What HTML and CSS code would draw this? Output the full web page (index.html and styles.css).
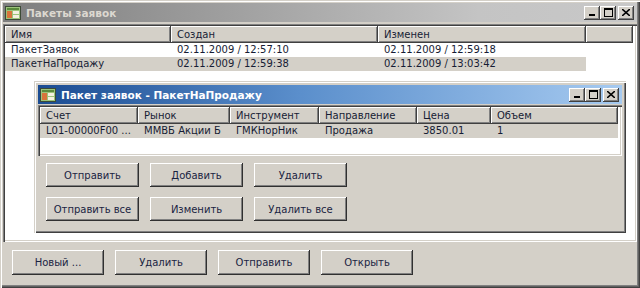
FILE: index.html
```html
<!DOCTYPE html>
<html lang="ru">
<head>
    <meta charset="UTF-8">
    <link rel="stylesheet" href="styles.css">
    <title>Пакеты заявок</title>
</head>
<body>
    <!-- Main window -->
    <div class="window">
        <div class="titlebar inactive">
            <svg class="app-icon" width="16" height="14" viewBox="0 0 16 14">
                <rect x="0.5" y="0.5" width="15" height="13" fill="#9cc47a" stroke="#3c4a36"/>
                <rect x="2" y="2" width="12" height="2" fill="#5a8a3c"/>
                <rect x="2" y="5" width="5" height="7" fill="#d8743a"/>
                <rect x="8" y="5" width="6" height="3" fill="#f4f0e0"/>
                <rect x="8" y="9" width="6" height="3" fill="#f4f0e0"/>
            </svg>
            <span class="title">Пакеты заявок</span>
            <div class="caption-buttons">
                <span class="cbtn"><svg width="8" height="7" viewBox="0 0 8 7"><rect x="1" y="5" width="6" height="2" fill="#000"/></svg></span>
                <span class="cbtn"><svg width="9" height="9" viewBox="0 0 9 9"><rect x="0.5" y="1" width="8" height="7.5" fill="none" stroke="#000"/><rect x="0" y="0" width="9" height="2" fill="#000"/></svg></span>
                <span class="cbtn close"><svg width="8" height="7" viewBox="0 0 8 7"><path d="M0 0 L8 7 M8 0 L0 7" stroke="#000" stroke-width="1.6"/></svg></span>
            </div>
        </div>

        <div class="list outer-list">
            <div class="lv-head">
                <span>Имя</span>
                <span>Создан</span>
                <span>Изменен</span>
                <span></span>
            </div>
            <div class="lv-row">
                <span>ПакетЗаявок</span>
                <span>02.11.2009 / 12:57:10</span>
                <span>02.11.2009 / 12:59:18</span>
                <span class="fill"></span>
            </div>
            <div class="lv-row sel">
                <span>ПакетНаПродажу</span>
                <span>02.11.2009 / 12:59:38</span>
                <span>02.11.2009 / 13:03:42</span>
                <span class="fill"></span>
            </div>

            <!-- Child window -->
            <div class="child">
                <div class="titlebar active">
                    <svg class="app-icon" width="16" height="14" viewBox="0 0 16 14">
                        <rect x="0.5" y="0.5" width="15" height="13" fill="#9cc47a" stroke="#3c4a36"/>
                        <rect x="2" y="2" width="12" height="2" fill="#5a8a3c"/>
                        <rect x="2" y="5" width="5" height="7" fill="#d8743a"/>
                        <rect x="8" y="5" width="6" height="3" fill="#f4f0e0"/>
                        <rect x="8" y="9" width="6" height="3" fill="#f4f0e0"/>
                    </svg>
                    <span class="title">Пакет заявок - ПакетНаПродажу</span>
                    <div class="caption-buttons">
                        <span class="cbtn"><svg width="8" height="7" viewBox="0 0 8 7"><rect x="1" y="5" width="6" height="2" fill="#000"/></svg></span>
                        <span class="cbtn"><svg width="9" height="9" viewBox="0 0 9 9"><rect x="0.5" y="1" width="8" height="7.5" fill="none" stroke="#000"/><rect x="0" y="0" width="9" height="2" fill="#000"/></svg></span>
                        <span class="cbtn close"><svg width="8" height="7" viewBox="0 0 8 7"><path d="M0 0 L8 7 M8 0 L0 7" stroke="#000" stroke-width="1.6"/></svg></span>
                    </div>
                </div>

                <div class="list inner-list">
                    <div class="lv-head">
                        <span>Счет</span>
                        <span>Рынок</span>
                        <span>Инструмент</span>
                        <span>Направление</span>
                        <span>Цена</span>
                        <span>Объем</span>
                    </div>
                    <div class="lv-row sel">
                        <span>L01-00000F00 ...</span>
                        <span>ММВБ Акции Б</span>
                        <span>ГМКНорНик</span>
                        <span>Продажа</span>
                        <span>3850.01</span>
                        <span>1</span>
                    </div>
                </div>

                <div class="panel">
                    <button class="btn">Отправить</button>
                    <button class="btn">Добавить</button>
                    <button class="btn">Удалить</button>
                    <button class="btn">Отправить все</button>
                    <button class="btn">Изменить</button>
                    <button class="btn">Удалить все</button>
                </div>
            </div>
        </div>

        <div class="bottom-bar">
            <button class="btn">Новый ...</button>
            <button class="btn">Удалить</button>
            <button class="btn">Отправить</button>
            <button class="btn">Открыть</button>
        </div>
    </div>
</body>
</html>
```

FILE: styles.css
```css
/* Base */
* {
    box-sizing: border-box;
}

body {
    margin: 0;
    width: 640px;
    height: 288px;
    overflow: hidden;
    background-color: #d4d0c8;
    font-family: "DejaVu Sans", Tahoma, sans-serif;
    font-size: 10px;
    color: #161c34;
}

/* Window frame */
.window {
    width: 640px;
    height: 288px;
    padding: 3px;
    display: flex;
    flex-direction: column;
    background-color: #d4d0c8;
    box-shadow: inset 1px 1px #d4d0c8, inset 2px 2px #fff,
                inset -1px -1px #404040, inset -2px -2px #606060, inset -3px -3px #808080;
}

/* Title bars */
.titlebar {
    height: 19px;
    flex-shrink: 0;
    display: flex;
    align-items: center;
    padding: 0 3px 0 2px;
}

.titlebar.inactive {
    background: linear-gradient(to right, #7e7e7e, #c4c4c4 75%, #c8c8c8);
    color: #dcd8d0;
}

.titlebar.active {
    background: linear-gradient(to right, #1b4c92, #5b8fcc 45%, #a6caf0);
    color: #fff;
}

.app-icon {
    flex-shrink: 0;
    margin-right: 5px;
}

.title {
    flex: 1;
    font-weight: bold;
    font-size: 10.5px;
    white-space: nowrap;
}

.caption-buttons {
    display: flex;
}

.cbtn {
    width: 16px;
    height: 14px;
    display: flex;
    align-items: center;
    justify-content: center;
    background-color: #d4d0c8;
    box-shadow: inset -1px -1px #404040, inset 1px 1px #fff, inset -2px -2px #808080;
}

.cbtn.close {
    margin-left: 2px;
}

/* List views */
.list {
    background-color: #fff;
    padding: 2px;
    flex-shrink: 0;
    box-shadow: inset 1px 1px #808080, inset 2px 2px #404040,
                inset -1px -1px #fff, inset -2px -2px #d4d0c8;
}

.outer-list {
    margin-top: 2px;
    height: 218px;
}

.lv-head,
.lv-row {
    display: grid;
}

.outer-list > .lv-head,
.outer-list > .lv-row {
    grid-template-columns: 166px 207px 208px 47px;
}

.inner-list .lv-head,
.inner-list .lv-row {
    grid-template-columns: 98px 92px 89px 98px 74px 127px;
}

.lv-head span {
    height: 17px;
    line-height: 15px;
    padding: 1px 6px;
    background-color: #d4d0c8;
    white-space: nowrap;
    box-shadow: inset -1px -1px #404040, inset 1px 1px #fff, inset -2px -2px #808080;
}

.lv-row span {
    height: 14px;
    line-height: 14px;
    padding: 0 6px;
    white-space: nowrap;
    overflow: hidden;
}

.lv-row.sel span:not(.fill) {
    background-color: #d4d0c8;
}

.inner-list {
    margin-top: 1px;
    height: 51px;
}

/* Child window */
.child {
    margin: 10px 0 0 29px;
    width: 592px;
    padding: 4px;
    background-color: #d4d0c8;
    box-shadow: inset 1px 1px #d4d0c8, inset 2px 2px #fff,
                inset -1px -1px #404040, inset -2px -2px #808080;
}

.panel {
    display: grid;
    grid-template-columns: repeat(3, 93px);
    column-gap: 11px;
    row-gap: 10px;
    padding: 7px 0 8px 8px;
}

/* Buttons */
.btn {
    height: 24px;
    padding: 0;
    border: 0;
    font: inherit;
    color: #1a2442;
    background-color: #d4d0c8;
    box-shadow: inset -1px -1px #303030, inset 1px 1px #fff, inset -2px -2px #808080;
}

.bottom-bar {
    display: flex;
    gap: 11px;
    padding: 8px 0 0 9px;
}

.bottom-bar .btn {
    width: 92px;
    height: 25px;
}
```
